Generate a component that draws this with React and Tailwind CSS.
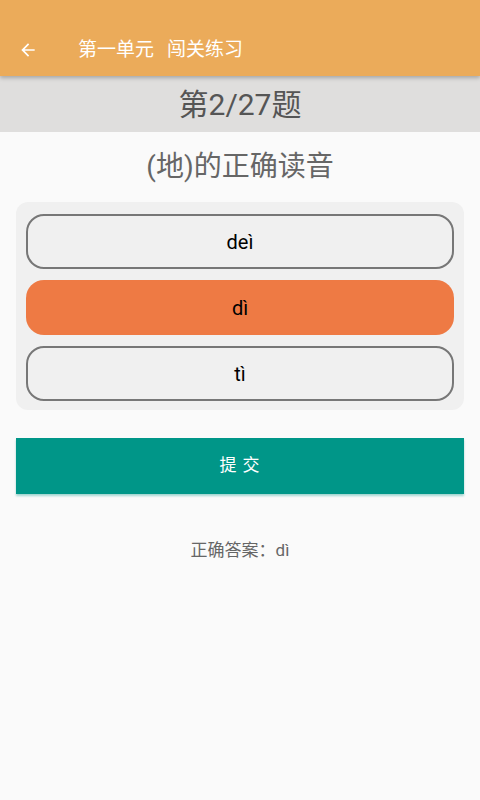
import React, { useState } from "react";

const options = ["deì", "dì", "tì"];

function App() {
  const [picked, setPicked] = useState(1);

  return (
    <div
      className="w-[480px] min-h-[800px] bg-[#fafafa] flex flex-col"
      style={{ fontFamily: '"Roboto", "Noto Sans CJK SC", sans-serif' }}
    >
      {/* HEADER */}
      <div className="relative z-10 h-[76px] pt-[24px] bg-[#ebab5a] shadow-[0_2px_4px_rgba(0,0,0,0.25)] flex items-center">
        <button className="w-[56px] h-[51px] flex items-center justify-center text-white">
          <svg width="20" height="20" viewBox="0 0 24 24" fill="currentColor">
            <path d="M20 11H7.83l5.59-5.59L12 4l-8 8 8 8 1.41-1.41L7.83 13H20v-2z" />
          </svg>
        </button>
        <div className="ml-[22px] flex gap-[13px] text-white text-[19px]">
          <span>第一单元</span>
          <span>闯关练习</span>
        </div>
      </div>

      {/* PROGRESS */}
      <div className="h-[56px] bg-[#dfdedd] flex items-center justify-center">
        <span className="text-[30px] text-[#555555]">第2/27题</span>
      </div>

      {/* QUESTION */}
      <div className="h-[70px] flex items-center justify-center">
        <span className="text-[28px] text-[#666666]">(地)的正确读音</span>
      </div>

      {/* OPTIONS */}
      <div className="mx-[16px] bg-[#f0f0f0] rounded-[12px] px-[10px] pt-[12px] pb-[9px] flex flex-col gap-[11px]">
        {options.map((opt, i) => (
          <button
            key={opt}
            onClick={() => setPicked(i)}
            className={
              picked === i
                ? "h-[55px] rounded-[18px] bg-[#ee7a44] text-black text-[20px]"
                : "h-[55px] rounded-[18px] border-2 border-[#777777] bg-[#f0f0f0] text-black text-[20px]"
            }
          >
            {opt}
          </button>
        ))}
      </div>

      {/* SUBMIT */}
      <button className="mx-[16px] mt-[28px] h-[56px] bg-[#009688] text-white text-[17px] tracking-[1px] shadow-[0_2px_2px_rgba(0,150,136,0.35)]">
        提 交
      </button>

      {/* ANSWER */}
      <div className="mt-[44px] text-center text-[17px] text-[#666666]">
        正确答案：dì
      </div>
    </div>
  );
}

export default App;
